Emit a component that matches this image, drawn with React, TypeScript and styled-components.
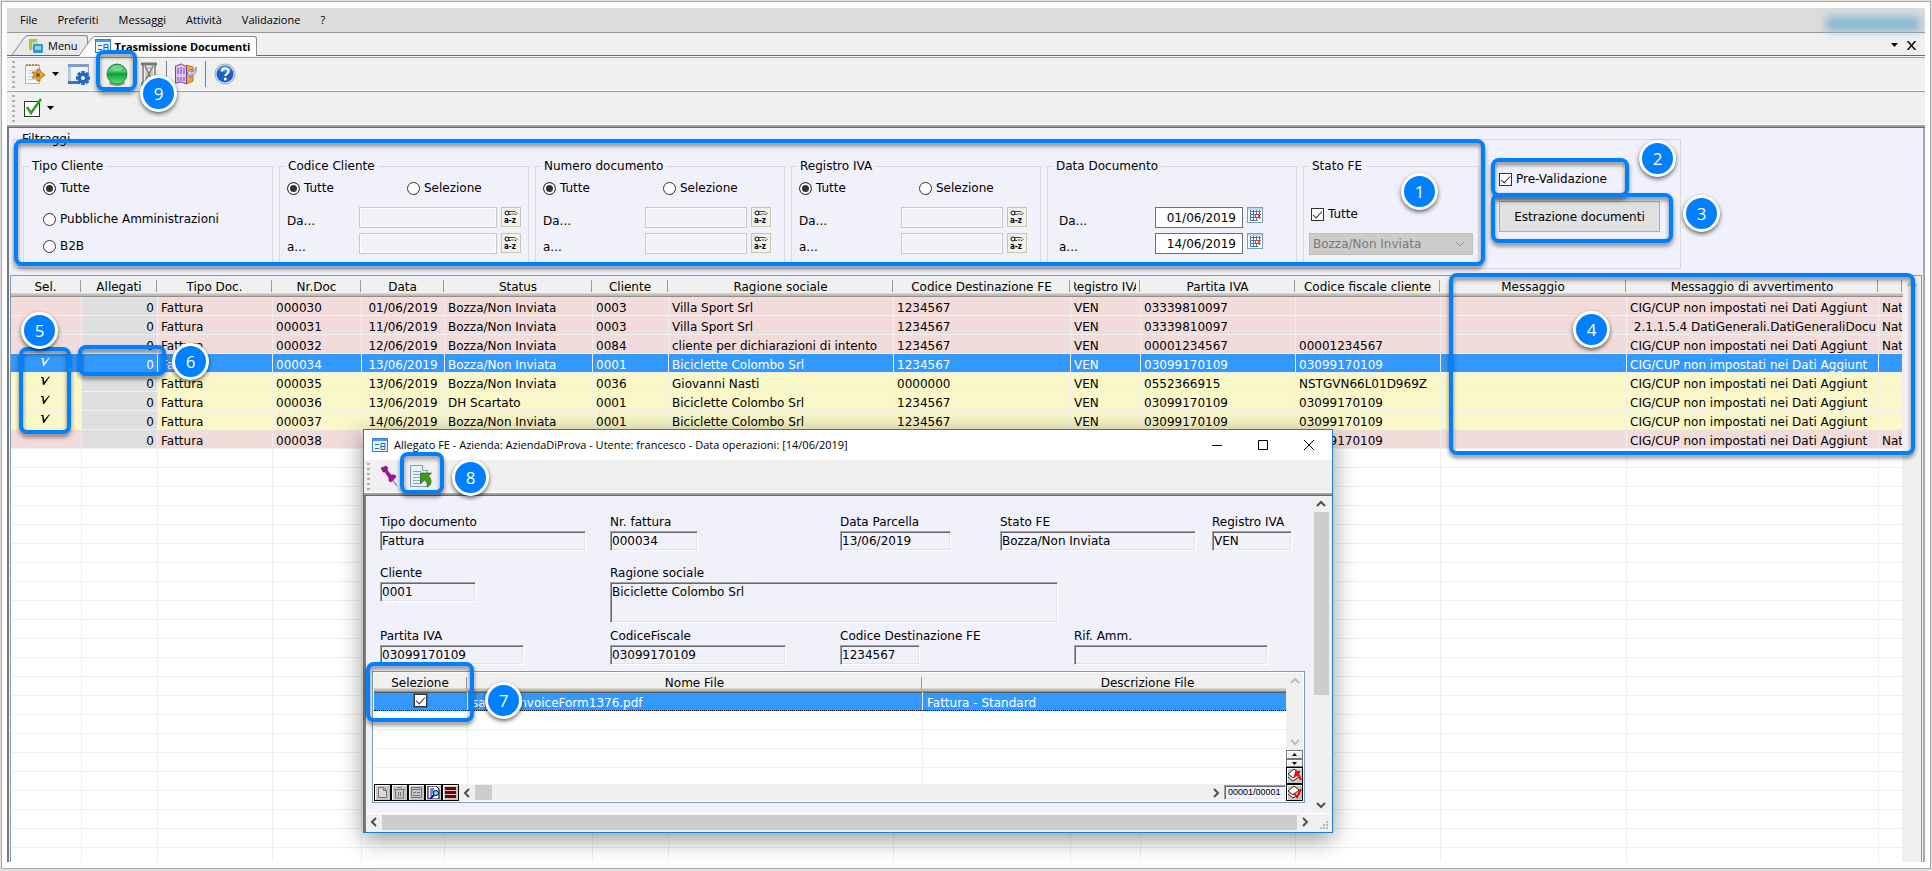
import React from 'react';
import styled, { createGlobalStyle, css } from 'styled-components';

const formFont = '"DejaVu Sans", Verdana, sans-serif';
const chromeFont = '"Open Sans", "Segoe UI", sans-serif';

const GlobalStyle = createGlobalStyle`
  *, *::before, *::after { box-sizing: border-box; }
  body { margin: 0; background: #e2e2e2; font: 12px/14px ${formFont}; color: #000; }
  button, input, select, textarea { font: inherit; color: inherit; margin: 0; }
  fieldset { min-width: 0; margin: 0; padding: 0; border: 1px solid #d9d9de; }
  legend { margin-left: 5px; padding: 0 3px; }
`;

/* ---------- shell ---------- */

const Page = styled.div`
  position: relative;
  height: 100vh;
  overflow: hidden;
  padding: 1px 1px 2px;
`;

const Frame = styled.div`
  height: 100%;
  border: 1px solid #a8a8a8;
  background: #fff;
  padding: 6px 5px;
`;

const AppWindow = styled.div`
  height: 100%;
  display: flex;
  flex-direction: column;
  background: #f1f1fb;
`;

const MenuBar = styled.nav`
  display: flex;
  align-items: center;
  gap: 20px;
  height: 25px;
  padding: 0 13px;
  background: #dcdcdc;
  border-bottom: 1px solid #999;
  font-family: ${chromeFont};
  font-size: 11px;
`;

const MenuItem = styled.button`
  padding: 0;
  border: 0;
  background: none;
`;

const Brand = styled.span`
  margin: 6px -8px 0 auto;
  width: 94px;
  height: 15px;
  background: linear-gradient(#a3c6d6, #79b3d2 60%, #8fbdd3);
  filter: blur(4px);
`;

const TabStrip = styled.div`
  display: flex;
  align-items: flex-end;
  height: 23px;
  padding: 0 9px 0 5px;
  background: #f0f0f0;
  border-bottom: 1px solid #696969;
  font-family: ${chromeFont};
  font-size: 11px;
`;

const TabButton = styled.button<{ $active?: boolean }>`
  display: flex;
  height: 20px;
  padding: 0;
  border: 0;
  background: none;
  font-weight: ${p => (p.$active ? 700 : 400)};
  ${p => p.$active && css`
    margin: 0 0 -1px -9px;
    z-index: 1;
  `}
`;

const TabBody = styled.span<{ $active?: boolean }>`
  display: flex;
  align-items: center;
  gap: 4px;
  height: 100%;
  padding-right: ${p => (p.$active ? 6 : 9)}px;
  border: solid #8a8a8a;
  border-width: 1px 1px 0 0;
  border-radius: 0 3px 0 0;
  background: ${p => (p.$active ? '#fff' : '#e9e9e9')};
`;

const StripTools = styled.div`
  display: flex;
  align-items: center;
  gap: 6px;
  margin: 0 0 2px auto;
  height: 16px;
`;

const PlainButton = styled.button<{ $w: number; $h?: number }>`
  display: grid;
  place-items: center;
  width: ${p => p.$w}px;
  height: ${p => p.$h ?? p.$w}px;
  flex: none;
  padding: 0;
  border: 0;
  background: none;
`;

const ToolbarRow = styled.div`
  display: flex;
  align-items: center;
  height: 34px;
  padding-left: 5px;
  background: #f0f0f0;
  border-top: 1px solid #a0a0a0;
  border-bottom: 1px solid #fff;
`;

const ToolbarStack = styled.div`
  padding-top: 1px;
  border-bottom: 1px solid #696969;
  box-shadow: inset 0 -2px #a0a0a0;
  padding-bottom: 2px;
`;

const Grip = styled.span`
  width: 3px;
  height: 27px;
  margin-right: 8px;
  background: repeating-linear-gradient(#b0b0b0 0 2px, transparent 2px 5px);
`;

const Divider = styled.span`
  width: 1px;
  height: 26px;
  margin: 0 7px;
  background: #808080;
`;

const Content = styled.main`
  flex: 1;
  min-height: 0;
  display: flex;
  flex-direction: column;
  border: solid;
  border-width: 0 2px;
  border-color: #7a7a7a #a8a8a8 #fff #7a7a7a;
  padding-right: 1px;
`;

/* ---------- filters ---------- */

const FilterArea = styled.div`
  display: flex;
  padding: 4px 4px 6px;
`;

const FilterBody = styled.div`
  display: flex;
  gap: 6px;
  padding: 13px 20px 3px 9px;
`;

const Group = styled.fieldset<{ $w?: number }>`
  width: ${p => p.$w ?? 250}px;
  height: 106px;
`;

const TypeRadios = styled.div`
  display: grid;
  grid-template-rows: 31px 27px 14px;
  align-items: start;
  padding: 8px 0 0 19px;
`;

const RangeBody = styled.div<{ $left: number; $right: number }>`
  display: flex;
  flex-direction: column;
  gap: 5px;
  padding: 8px ${p => p.$right}px 0 ${p => p.$left}px;
`;

const RadioPair = styled.div`
  display: grid;
  grid-template-columns: 120px auto;
  height: 14px;
  margin-bottom: 7px;
`;

const RangeRow = styled.div`
  display: flex;
  align-items: flex-start;
  gap: 4px;
  height: 21px;

  label { flex: 1; align-self: flex-end; }
`;

const Choice = styled.label`
  display: flex;
  align-items: center;
  gap: 4px;
  height: 14px;
  white-space: nowrap;
`;

const Radio = styled.input.attrs({ type: 'radio' })`
  appearance: none;
  width: 13px;
  height: 13px;
  flex: none;
  border: 1px solid #333;
  border-radius: 50%;
  background: #fff;

  &:checked { background: #333; box-shadow: inset 0 0 0 2px #fff; }
`;

const Check = styled.input.attrs({ type: 'checkbox' })`
  appearance: none;
  display: grid;
  place-items: start center;
  width: 13px;
  height: 13px;
  flex: none;
  border: 1px solid #333;
  background: #fff;

  &:checked::after {
    content: '';
    width: 5px;
    height: 9px;
    border: solid #333;
    border-width: 0 1px 1px 0;
    transform: rotate(42deg);
  }
`;

const RangeInput = styled.input<{ $w: number }>`
  width: ${p => p.$w}px;
  height: 21px;
  padding: 0 2px;
  border: 1px solid #c8c8c8;
  background: #f1f1fb;
  box-shadow: inset 0 0 0 1px #fff;
`;

const DateInput = styled.input`
  width: 88px;
  height: 21px;
  padding: 0 6px 0 2px;
  border: 1px solid #6e6e6e;
  background: #fff;
  text-align: right;
`;

const LookupButton = styled(PlainButton)`
  border: 1px solid #c5c5b8;
  background: #f2f2ea;
`;

const CalendarButton = styled(PlainButton)`
  border: 1px solid #7f9db9;
  background: #fff;
`;

const StatusBody = styled.div`
  display: flex;
  flex-direction: column;
  gap: 12px;
  padding: 34px 5px 0;

  label { padding-left: 2px; }
`;

const StatusSelectBox = styled.div`
  display: flex;
  align-items: center;
  height: 22px;
  padding-right: 7px;
  border: 1px solid #bfbfbf;
  background: #ccc;
`;

const StatusSelect = styled.select`
  appearance: none;
  flex: 1;
  padding: 0 3px;
  border: 0;
  background: none;
  opacity: 1;
  color: #787878;
`;

const Actions = styled.div`
  display: flex;
  flex-direction: column;
  gap: 15px;
  padding: 13px 0 0 14px;
`;

const ActionButton = styled.button`
  width: 161px;
  height: 31px;
  padding: 0;
  border: 1px solid #adadad;
  background: #e1e1e1;
`;

/* ---------- data grid ---------- */

const GridBox = styled.section`
  flex: 1;
  min-height: 0;
  display: flex;
  margin-left: 1px;
  border: 1px solid #7f9db9;
  border-bottom: 0;
  background: #fff;
`;

const GridClip = styled.div`
  flex: 1;
  min-width: 0;
  min-height: 0;
  overflow: hidden;
  background: #fff;
`;

const Table = styled.table<{ $w?: number }>`
  width: ${p => (p.$w ? `${p.$w}px` : '100%')};
  table-layout: fixed;
  border-collapse: separate;
  border-spacing: 0;
`;

const HeadCell = styled.th<{ $h: number }>`
  height: ${p => p.$h}px;
  padding: 0;
  font-weight: 400;
  background:
    linear-gradient(#999, #999) right 1px top 4px / 1px 12px no-repeat,
    linear-gradient(#f0f0f0, #f0f0f0 calc(100% - 4px), #dcdacb calc(100% - 4px), #b5b2a3 calc(100% - 1px), #8f8f8f calc(100% - 1px));

  span {
    display: flex;
    justify-content: center;
    margin: 0 5px 0 3px;
    overflow: hidden;
    white-space: nowrap;
  }
`;

type Tone = 'pink' | 'blue' | 'yellow' | 'empty';
const toneColor: Record<Tone, string> = { pink: '#f2dcdb', blue: '#3399ff', yellow: '#faf7c8', empty: '#fff' };

const Row = styled.tr<{ $tone: Tone }>`
  background: ${p => toneColor[p.$tone]};
  color: ${p => (p.$tone === 'blue' ? '#fff' : '#000')};

  td:nth-child(2) { ${p => (p.$tone === 'pink' || p.$tone === 'yellow') && 'background: #dfdfdf;'} }
`;

const Cell = styled.td<{ $align?: 'right' | 'center' }>`
  height: 19px;
  padding: 3px 3px 0;
  border: solid #efefef;
  border-width: 0 1px 1px 0;
  overflow: hidden;
  white-space: pre;
  text-align: ${p => p.$align ?? 'left'};
`;

const TickCell = styled(Cell)`
  padding: 0 0 2px;

  svg { display: block; margin: 0 auto; }
`;

const ScrollTrack = styled.div<{ $horizontal?: boolean; $size?: number; $grow?: boolean }>`
  display: flex;
  flex-direction: ${p => (p.$horizontal ? 'row' : 'column')};
  align-items: center;
  ${p => (p.$horizontal ? 'height' : 'width')}: ${p => p.$size ?? 16}px;
  flex: ${p => (p.$grow ? '1' : 'none')};
  background: #f0f0f0;
`;

const ScrollSpace = styled.div`flex: 1;`;

const Thumb = styled.div<{ $length?: number; $horizontal?: boolean; $grow?: boolean }>`
  ${p => (p.$horizontal ? 'width' : 'height')}: ${p => p.$length ?? 17}px;
  ${p => (p.$horizontal ? 'height' : 'width')}: 15px;
  ${p => p.$grow && 'flex: 1;'}
  background: #cdcdcd;
`;

/* ---------- dialog ---------- */

const Dialog = styled.section`
  position: absolute;
  z-index: 2;
  left: 363px;
  top: 429px;
  width: 970px;
  height: 404px;
  display: flex;
  flex-direction: column;
  border: 1px solid #1a7fd4;
  background: #f1f1fb;
  box-shadow: 0 6px 22px rgba(0, 0, 0, .42);
`;

const TitleBar = styled.header`
  display: flex;
  align-items: center;
  gap: 6px;
  height: 30px;
  padding: 0 11px 0 8px;
  background: #fff;
  font-family: ${chromeFont};
`;

const Title = styled.h1`
  flex: 1;
  margin: 0;
  font-size: 11px;
  font-weight: 400;
`;

const WindowButtons = styled.div`
  display: flex;
  gap: 22px;
`;

const DialogToolbar = styled.div`
  display: flex;
  align-items: center;
  height: 36px;
  padding: 0 0 3px 3px;
  background: #f0f0f0;
  border-bottom: 1px solid #696969;
  box-shadow: inset 0 -2px #a0a0a0, inset 0 -3px #fff;
`;

const DialogBody = styled.div`
  flex: 1;
  min-height: 0;
  display: flex;
  flex-direction: column;
  border-left: 2px solid #7a7a7a;
  padding: 0 3px 2px 0;
  background: #f0f0f0;
`;

const DialogMain = styled.div`
  flex: 1;
  min-height: 0;
  display: flex;
`;

const DialogFooter = styled.div`
  display: flex;
  align-items: flex-end;
  gap: 6px;
  border-top: 1px solid #fff;
`;

const Form = styled.form`
  flex: 1;
  min-width: 0;
  display: flex;
  flex-direction: column;
  padding: 19px 8px 10px 6px;
  background: #f1f1fb;
`;

const FormRow = styled.div<{ $after: number }>`
  display: flex;
  padding-left: 8px;
  margin-bottom: ${p => p.$after}px;
`;

const Field = styled.label<{ $span: number }>`
  display: flex;
  flex-direction: column;
  flex: none;
  gap: 2px;
  width: ${p => p.$span}px;
  white-space: nowrap;
`;

const sunken = css`
  border: 1px solid;
  border-color: #a0a0a0 #fff #fff #a0a0a0;
  box-shadow: inset 1px 1px #696969, inset -1px -1px #e3e3e3;
  background: #f1f1fb;
`;

const FieldInput = styled.input<{ $w: number }>`
  width: ${p => p.$w}px;
  height: 20px;
  padding: 0 1px;
  ${sunken}
`;

const FieldArea = styled.textarea<{ $w: number }>`
  width: ${p => p.$w}px;
  height: 41px;
  padding: 2px 1px;
  resize: none;
  ${sunken}
`;

const FileBox = styled.div`
  display: flex;
  height: 132px;
  padding: 1px;
  border: 1px solid #7f9db9;
  background: #fff;
`;

const FileMain = styled.div`
  flex: 1;
  min-width: 0;
  display: flex;
  flex-direction: column;
`;

const FileSide = styled.div`
  display: flex;
  flex-direction: column;
  width: 17px;
`;

const FileFooter = styled.div`
  display: flex;
  align-items: center;
  height: 17px;
  background: #f0f0f0;
`;

const FileCell = styled(Cell)<{ $dotted?: boolean }>`
  padding: 4px 4px 0;
  ${p => p.$dotted && 'border-bottom: 1px dotted #000; box-shadow: inset 0 1px #4e5d6c;'}
`;

const FileCheckCell = styled(FileCell)`
  padding: 0;

  ${Check} { display: inline-grid; vertical-align: top; outline: 1px solid #5b6670; }
`;

const SmallTool = styled(PlainButton)`
  border: 1px solid #000;
  background: #c6c6c6;
  box-shadow: inset 1px 1px #fff;
`;

const Spinner = styled.div`
  display: flex;
  flex-direction: column;
  height: 17px;

  button {
    border: 1px solid #777;
    background: #f0f0f0;
    box-shadow: inset 1px 1px #fff;
  }
`;

const Counter = styled.output`
  width: 62px;
  height: 15px;
  padding-left: 3px;
  font: 9px/13px "Liberation Sans", Arial, sans-serif;
  ${sunken}
`;

/* ---------- numbered callouts ---------- */

const Outline = styled.div<{ $x: number; $y: number; $w: number; $h: number }>`
  position: absolute;
  z-index: 3;
  left: ${p => p.$x}px;
  top: ${p => p.$y}px;
  width: ${p => p.$w}px;
  height: ${p => p.$h}px;
  border: 4px solid #0080ff;
  border-radius: 8px;
  filter: drop-shadow(0 3px 2px rgba(0, 0, 0, .5));
  pointer-events: none;
`;

const Bubble = styled.div<{ $x: number; $y: number }>`
  position: absolute;
  z-index: 4;
  left: ${p => p.$x - 18}px;
  top: ${p => p.$y - 18}px;
  width: 37px;
  height: 37px;
  display: grid;
  place-items: center;
  border: 3px solid #fff;
  border-radius: 50%;
  background: #0080ff;
  box-shadow: 0 2px 4px rgba(0, 0, 0, .6);
  color: #fff;
  font: 17px/20px ${chromeFont};
`;

/* ---------- drawings ---------- */

const Chevron = ({ dir, color = '#505050' }: { dir: 'up' | 'down' | 'left' | 'right'; color?: string }) => {
  const d = { up: 'M4 10l4-4 4 4', down: 'M4 6l4 4 4-4', left: 'M10 4L6 8l4 4', right: 'M6 4l4 4-4 4' }[dir];
  return <svg width="16" height="16" fill="none" stroke={color} strokeWidth="2"><path d={d} /></svg>;
};

const CaretDown = () => <svg width="7" height="4"><path d="M0 0h7L3.500 4z" fill="#000" /></svg>;

const SlantEdge = ({ fill }: { fill: string }) => (
  <svg width="16" height="20"><path d="M0 20L12 3Q14 .5 16 .5V20z" fill={fill} /><path d="M0 20L12 3Q14 .5 16 .5" fill="none" stroke="#8a8a8a" /></svg>
);

const FormIcon = () => (
  <svg width="16" height="15">
    <rect x=".5" y=".5" width="15" height="13" fill="#eaf5ff" stroke="#2f7fd6" />
    <path d="M1 1h14v2H1z" fill="#4a9bea" />
    <path d="M3 6.500h4M3 10.500h4M9 5.500h4v6H9zM9 8.500h4" fill="none" stroke="#2467b8" />
  </svg>
);

const MenuTabIcon = () => (
  <svg width="16" height="16">
    <path d="M1 1h8v3H4v8H1z" fill="#a9c938" /><path d="M4 4h7v8H4z" fill="#d0d5cc" />
    <rect x="5" y="6" width="10" height="9" rx="1" fill="#2f9bc8" /><path d="M7 9h6M7 11h6" stroke="#fff" />
  </svg>
);

const Gear = ({ x, y, r, fill }: { x: number; y: number; r: number; fill: string }) => (
  <g transform={`translate(${x} ${y})`}>
    {[0, 45, 90, 135].map(a => <rect key={a} x={-r} y={-r / 4} width={r * 2} height={r / 2} fill={fill} transform={`rotate(${a})`} />)}
    <circle r={r * 0.72} fill={fill} /><circle r={r * 0.28} fill="#fff" />
  </g>
);

const NoteGearIcon = () => (
  <svg width="22" height="24">
    <path d="M1.500 3.500h14v18h-14z" fill="#f4f8fd" stroke="#9fb6d4" />
    <path d="M2 3h13" stroke="#b48a3c" strokeWidth="2" strokeDasharray="2 1" />
    <path d="M4 8.500h9M4 11.500h8M4 14.500h8M4 17.500h9" stroke="#c6d6ea" />
    <path d="M8 10h5V7h3v2l5 4-5 4v2h-3v-3H8l2-3z" fill="#eda02c" stroke="#a8670c" strokeWidth=".8" />
    <circle cx="14" cy="13" r="2" fill="#7a4d10" />
  </svg>
);

const WindowGearIcon = () => (
  <svg width="24" height="24">
    <rect x="1.500" y="2.500" width="20" height="18" fill="#f3f3ee" stroke="#a0a8b4" />
    <path d="M1 2h21v3H1z" fill="#7d9cc8" /><path d="M1 5h3v16H1z" fill="#b7cbe6" /><path d="M1 19h12v3H1z" fill="#3f73b8" />
    <Gear x={16} y={16} r={7} fill="#2467c4" />
  </svg>
);

const BallIcon = () => (
  <svg width="24" height="24">
    <defs><linearGradient id="ball" x2="0" y2="1"><stop offset="0" stopColor="#2aa54a" /><stop offset=".35" stopColor="#4fd06f" /><stop offset=".5" stopColor="#139a3a" /><stop offset="1" stopColor="#57f07c" /></linearGradient></defs>
    <ellipse cx="12" cy="21" rx="8" ry="3" fill="#8c9a8f" />
    <circle cx="12" cy="12" r="10" fill="url(#ball)" stroke="#14762f" strokeWidth=".8" />
    <ellipse cx="12" cy="6" rx="6" ry="3" fill="#a5ecb5" opacity=".5" />
  </svg>
);

const HourglassIcon = () => (
  <svg width="18" height="24" fill="none" stroke="#777" strokeWidth="1.500">
    <path d="M1 2h16M1 22h16" strokeWidth="3" /><path d="M3 3v18M15 3v18" /><path d="M5 4l4 8-4 8M13 4l-4 8 4 8" fill="#ccc" /><path d="M6 6h6M6 18h6" stroke="#aaa" />
  </svg>
);

const DoorIcon = () => (
  <svg width="24" height="24">
    <path d="M12 3l7 2v14l-7 3z" fill="#f7a531" stroke="#c86a12" />
    <path d="M1.500 4l6-2 5 3v17l-5-2-6 1z" fill="#dcc4ee" stroke="#7a3fa8" />
    <path d="M4 6v6M7 5v7M10 6v6M4 15v4M7 15v4M10 15v4" stroke="#8a55b4" strokeWidth="1.200" />
    <path d="M22 5c1 5-1 8-5 8v3l-4-5 4-4v3c3 0 4-2 5-5z" fill="#c3d0f6" stroke="#5b78c8" strokeWidth=".8" />
  </svg>
);

const HelpIcon = () => (
  <svg width="24" height="24">
    <circle cx="12" cy="12" r="10" fill="#dfe6f2" stroke="#9aa8c2" /><circle cx="12" cy="12" r="8.500" fill="#1c5ec6" />
    <path d="M5 8a8 8 0 0 1 14 0q-7 4-14 0z" fill="#6fa4ee" opacity=".6" />
    <path d="M9 9.500c0-4 6.500-4 6.500-.3 0 2.300-3 2.300-3 4.800" fill="none" stroke="#fff" strokeWidth="2.300" /><circle cx="12.300" cy="17" r="1.500" fill="#fff" />
  </svg>
);

const CheckIcon = () => (
  <svg width="20" height="22">
    <rect x="1.500" y="4.500" width="15" height="15" fill="#fff" stroke="#2c3a2c" />
    <path d="M4 10l4 6L18 2" fill="none" stroke="#2f9e28" strokeWidth="2.500" />
  </svg>
);

const KeyIcon = () => (
  <svg width="14" height="16">
    <circle cx="3" cy="4" r="2" fill="#fff" stroke="#000" />
    <path d="M5 2.500h6l1 1 1 1-1 1h-1l-1-1-1 1-1-1-1 1H5z" fill="#fff" stroke="#000" strokeWidth=".7" />
    <text x="0" y="14" fontSize="8" fontWeight="700" fontFamily="DejaVu Sans Condensed">a-z</text>
  </svg>
);

const CalendarIcon = () => (
  <svg width="14" height="14">
    <path d="M2 3.500h11M2 6.500h11M2 9.500h11M2 12.500h8M2.500 2v11M5.500 2v11M8.500 2v11M11.500 2v9" stroke="#4d74b4" />
    <rect x="7.500" y="6.500" width="3" height="3" fill="#fff" stroke="#e03c14" /><path d="M0 0h14v2H0z" fill="#bdd6f2" />
  </svg>
);

const TickMark = () => <svg width="10" height="10"><path d="M0 1h2.500l.7 5L8 .5h1L3 9H2L1.200 2H0z" fill="currentColor" /></svg>;

const PinIcon = () => (
  <svg width="20" height="24">
    <path d="M12 15l5 7" stroke="#999" strokeWidth="1.500" />
    <path d="M1 4l5-2 2 2-1 2 4 5 4 0 1 2-5 5-2-1 0-3-4-6-2 0z" fill="#a3109c" stroke="#6f0a6c" strokeWidth=".6" />
  </svg>
);

const DocArrowIcon = () => (
  <svg width="24" height="24">
    <path d="M1.500 1.500h12l5 5v16h-17z" fill="#e9f1fb" stroke="#7f9cc4" /><path d="M13.500 1.500v5h5" fill="#fff" stroke="#7f9cc4" />
    <path d="M4 7.500h8M4 10.500h9M4 13.500h7M4 16.500h7M4 19.500h8" stroke="#8aa6ce" />
    <path d="M11.500 9h11l-3 3c4 4 3 9-1 11 0-4-1-6-3-7l-4 4z" fill="#3f9a1c" stroke="#226208" strokeWidth=".7" />
  </svg>
);

const PageIcon = () => <svg width="13" height="13" fill="#d8d8d8" stroke="#777"><path d="M2.500 1.500h5l3 3v7h-8zM7.500 1.500v3h3" /></svg>;
const TrashIcon = () => <svg width="13" height="13" fill="none" stroke="#777"><path d="M1 3.500h11M4.500 1.500h4M2.500 4v8h8V4M5.500 6v4M7.500 6v4" /></svg>;
const CardIcon = () => <svg width="13" height="13" fill="none" stroke="#777"><path d="M1.500 1.500h10v10h-10zM1 3.500h11M3 6.500h3M7 6.500h3M3 9.500h7" /></svg>;
const PreviewIcon = () => (
  <svg width="13" height="13"><path d="M1 0h8l3 3v10H1z" fill="#fff" stroke="#000" /><path d="M3 3h4M3 5h4M3 7h3M3 9h2" stroke="#00c" /><circle cx="9" cy="7" r="2.500" fill="#5fd" stroke="#006" /><path d="M7 9l-4 4" stroke="#00a" strokeWidth="2" /></svg>
);
const BarsIcon = () => <svg width="13" height="13"><path d="M1 1h11v3H1zM1 5h11v3H1zM1 9h11v3H1z" fill="#800000" /></svg>;
const StackIcon = ({ down }: { down?: boolean }) => (
  <svg width="15" height="15"><path d="M1 6l6-5 5 4-6 5zM1 9l5 4 6-4" fill="#fff" stroke="#222" /><path d={down ? 'M7 8l3 4 4-8' : 'M14 12l-3-6-3 2 1-4h4'} fill="none" stroke="#f00" strokeWidth="2" /></svg>
);
const MinimizeIcon = () => <svg width="12" height="12"><path d="M1 6.500h10" stroke="#000" /></svg>;
const MaximizeIcon = () => <svg width="12" height="12"><path d="M1.500 1.500h9v9h-9z" fill="none" stroke="#000" /></svg>;
const CloseIcon = () => <svg width="12" height="12"><path d="M1 1l10 10M11 1L1 11" stroke="#000" /></svg>;
const CloseTabIcon = () => <svg width="9" height="9"><path d="M.5 0l8 9M8.500 0l-8 9" stroke="#000" strokeWidth="1.500" /></svg>;
const GripCorner = () => <svg width="10" height="10" fill="#bcbcbc"><path d="M7 1h2v2H7zM7 4h2v2H7zM4 4h2v2H4zM7 7h2v2H7zM4 7h2v2H4zM1 7h2v2H1z" /></svg>;

/* ---------- data ---------- */

const columns: { label: string; width?: number; align?: 'right' | 'center' }[] = [
  { label: 'Sel.', width: 71, align: 'center' },
  { label: 'Allegati', width: 76, align: 'right' },
  { label: 'Tipo Doc.', width: 115 },
  { label: 'Nr.Doc', width: 89 },
  { label: 'Data', width: 83, align: 'center' },
  { label: 'Status', width: 148 },
  { label: 'Cliente', width: 76 },
  { label: 'Ragione sociale', width: 225 },
  { label: 'Codice Destinazione FE', width: 177 },
  { label: 'Registro IVA', width: 70 },
  { label: 'Partita IVA', width: 155 },
  { label: 'Codice fiscale cliente', width: 145 },
  { label: 'Messaggio', width: 186 },
  { label: 'Messaggio di avvertimento', width: 252 },
  { label: '' },
];

const BOZZA = 'Bozza/Non Inviata';
const CIG = 'CIG/CUP non impostati nei Dati Aggiunt';
const DATI = ' 2.1.1.5.4 DatiGenerali.DatiGeneraliDocu';
const COLOMBO = 'Biciclette Colombo Srl';

const records: { tone: Tone; sel: boolean; cells: string[] }[] = [
  { tone: 'pink', sel: false, cells: ['000030', '01/06/2019', BOZZA, '0003', 'Villa Sport Srl', '1234567', 'VEN', '03339810097', '', '', CIG, 'Nat'] },
  { tone: 'pink', sel: false, cells: ['000031', '11/06/2019', BOZZA, '0003', 'Villa Sport Srl', '1234567', 'VEN', '03339810097', '', '', DATI, 'Nat'] },
  { tone: 'pink', sel: false, cells: ['000032', '12/06/2019', BOZZA, '0084', 'cliente per dichiarazioni di intento', '1234567', 'VEN', '00001234567', '00001234567', '', CIG, 'Nat'] },
  { tone: 'blue', sel: true, cells: ['000034', '13/06/2019', BOZZA, '0001', COLOMBO, '1234567', 'VEN', '03099170109', '03099170109', '', CIG, ''] },
  { tone: 'yellow', sel: true, cells: ['000035', '13/06/2019', BOZZA, '0036', 'Giovanni Nasti', '0000000', 'VEN', '0552366915', 'NSTGVN66L01D969Z', '', CIG, ''] },
  { tone: 'yellow', sel: true, cells: ['000036', '13/06/2019', 'DH Scartato', '0001', COLOMBO, '1234567', 'VEN', '03099170109', '03099170109', '', CIG, ''] },
  { tone: 'yellow', sel: true, cells: ['000037', '14/06/2019', BOZZA, '0001', COLOMBO, '1234567', 'VEN', '03099170109', '03099170109', '', CIG, ''] },
  { tone: 'pink', sel: false, cells: ['000038', '', '', '', '', '', '', '', '03099170109', '', CIG, 'Nat'] },
];

const outlines = [
  [14, 139, 1471, 127], [1491, 158, 138, 39], [1491, 193, 182, 50], [1449, 273, 466, 182],
  [19, 347, 52, 87], [78, 345, 88, 31], [96, 50, 41, 41], [400, 452, 44, 42], [366, 662, 108, 60],
];

const bubbles = [
  [1419, 191], [1657, 158], [1701, 213], [1591, 329], [39, 330], [190, 361], [503, 700], [470, 477], [158, 93],
];

/* ---------- sections ---------- */

const RangeGroup = ({ name, title, inputWidth, right }: { name: string; title: string; inputWidth: number; right: number }) => (
  <Group>
    <legend>{title}</legend>
    <RangeBody $left={7} $right={right}>
      <RadioPair>
        <Choice><Radio name={name} defaultChecked />Tutte</Choice>
        <Choice><Radio name={name} />Selezione</Choice>
      </RadioPair>
      {['Da...', 'a...'].map(text => (
        <RangeRow key={text}>
          <label htmlFor={name + text}>{text}</label>
          <RangeInput id={name + text} $w={inputWidth} disabled />
          <LookupButton type="button" $w={20} aria-label={`Cerca ${title}`}><KeyIcon /></LookupButton>
        </RangeRow>
      ))}
    </RangeBody>
  </Group>
);

const Filters = () => (
  <FilterArea>
    <fieldset>
      <legend>Filtraggi</legend>
      <FilterBody>
        <Group>
          <legend>Tipo Cliente</legend>
          <TypeRadios>
            <Choice><Radio name="tipo" defaultChecked />Tutte</Choice>
            <Choice><Radio name="tipo" />Pubbliche Amministrazioni</Choice>
            <Choice><Radio name="tipo" />B2B</Choice>
          </TypeRadios>
        </Group>
        <RangeGroup name="codice" title="Codice Cliente" inputWidth={138} right={7} />
        <RangeGroup name="numero" title="Numero documento" inputWidth={102} right={13} />
        <RangeGroup name="registro" title="Registro IVA" inputWidth={102} right={13} />
        <Group>
          <legend>Data Documento</legend>
          <RangeBody $left={11} $right={33}>
            <RadioPair />
            {[['Da...', '01/06/2019'], ['a...', '14/06/2019']].map(([text, value]) => (
              <RangeRow key={text}>
                <label htmlFor={'data' + text}>{text}</label>
                <DateInput id={'data' + text} defaultValue={value} />
                <CalendarButton type="button" $w={16} aria-label="Calendario"><CalendarIcon /></CalendarButton>
              </RangeRow>
            ))}
          </RangeBody>
        </Group>
        <Group $w={176}>
          <legend>Stato FE</legend>
          <StatusBody>
            <Choice><Check defaultChecked />Tutte</Choice>
            <StatusSelectBox>
              <StatusSelect aria-label="Stato FE" disabled><option>{BOZZA}</option></StatusSelect>
              <svg width="10" height="6" fill="none" stroke="#999"><path d="M1 1l4 4 4-4" /></svg>
            </StatusSelectBox>
          </StatusBody>
        </Group>
        <Actions>
          <Choice><Check defaultChecked />Pre-Validazione</Choice>
          <ActionButton type="button">Estrazione documenti</ActionButton>
        </Actions>
      </FilterBody>
    </fieldset>
  </FilterArea>
);

const DocumentGrid = () => (
  <GridBox>
    <GridClip>
      <Table>
        <colgroup>{columns.map(c => <col key={c.label} width={c.width} />)}</colgroup>
        <thead><tr>{columns.map(c => <HeadCell key={c.label} $h={21}><span>{c.label}</span></HeadCell>)}</tr></thead>
        <tbody>
          {records.map(r => (
            <Row key={r.cells[0]} $tone={r.tone}>
              <TickCell>{r.sel && <TickMark />}</TickCell>
              <Cell $align="right">0</Cell>
              <Cell>Fattura</Cell>
              {r.cells.map((text, i) => <Cell key={i} $align={columns[i + 3].align}>{text}</Cell>)}
            </Row>
          ))}
          {Array.from({ length: 22 }, (_, n) => (
            <Row key={n} $tone="empty">{columns.map(c => <Cell key={c.label} />)}</Row>
          ))}
        </tbody>
      </Table>
    </GridClip>
    <ScrollTrack $size={18}><Chevron dir="up" color="#b8b8b8" /></ScrollTrack>
  </GridBox>
);

const TextField = ({ label, value, span, width }: { label: string; value: string; span: number; width: number }) => (
  <Field $span={span}>{label}<FieldInput $w={width} value={value} readOnly /></Field>
);

const FileTable = () => (
  <FileBox>
    <FileMain>
      <GridClip>
        <Table $w={1000}>
          <colgroup><col width={94} /><col width={455} /><col /></colgroup>
          <thead><tr>{['Selezione', 'Nome File', 'Descrizione File'].map(t => <HeadCell key={t} $h={19}><span>{t}</span></HeadCell>)}</tr></thead>
          <tbody>
            <Row $tone="blue">
              <FileCheckCell $dotted $align="center"><Check defaultChecked aria-label="Seleziona file" /></FileCheckCell>
              <FileCell $dotted>sampleInvoiceForm1376.pdf</FileCell>
              <FileCell $dotted>Fattura - Standard</FileCell>
            </Row>
            {[1, 2, 3, 4].map(n => <Row key={n} $tone="empty"><FileCell /><FileCell /><FileCell /></Row>)}
          </tbody>
        </Table>
      </GridClip>
      <FileFooter>
        <SmallTool type="button" $w={17} aria-label="Nuovo"><PageIcon /></SmallTool>
        <SmallTool type="button" $w={17} aria-label="Elimina"><TrashIcon /></SmallTool>
        <SmallTool type="button" $w={17} aria-label="Scheda"><CardIcon /></SmallTool>
        <SmallTool type="button" $w={17} aria-label="Anteprima"><PreviewIcon /></SmallTool>
        <SmallTool type="button" $w={17} aria-label="Elenco"><BarsIcon /></SmallTool>
        <Chevron dir="left" /><Thumb $horizontal /><ScrollSpace /><Chevron dir="right" />
        <Counter>00001/00001</Counter>
      </FileFooter>
    </FileMain>
    <FileSide>
      <ScrollTrack $grow $size={17}><Chevron dir="up" color="#bdbdbd" /><ScrollSpace /><Chevron dir="down" color="#bdbdbd" /></ScrollTrack>
      <Spinner>
        <PlainButton type="button" $w={17} $h={9} aria-label="Su"><svg width="5" height="3"><path d="M0 3h5L2.500 0z" /></svg></PlainButton>
        <PlainButton type="button" $w={17} $h={8} aria-label="Giù"><svg width="5" height="3"><path d="M0 0h5L2.500 3z" /></svg></PlainButton>
      </Spinner>
      <SmallTool type="button" $w={17} aria-label="Primo"><StackIcon /></SmallTool>
      <SmallTool type="button" $w={17} aria-label="Ultimo"><StackIcon down /></SmallTool>
    </FileSide>
  </FileBox>
);

const AttachmentDialog = () => (
  <Dialog role="dialog" aria-labelledby="dialog-title">
    <TitleBar>
      <FormIcon />
      <Title id="dialog-title">Allegato FE - Azienda: AziendaDiProva - Utente: francesco - Data operazioni: [14/06/2019]</Title>
      <WindowButtons>
        <PlainButton $w={24} aria-label="Riduci"><MinimizeIcon /></PlainButton>
        <PlainButton $w={24} aria-label="Ingrandisci"><MaximizeIcon /></PlainButton>
        <PlainButton $w={24} aria-label="Chiudi"><CloseIcon /></PlainButton>
      </WindowButtons>
    </TitleBar>
    <DialogToolbar>
      <Grip />
      <PlainButton $w={24} aria-label="Fissa"><PinIcon /></PlainButton>
      <PlainButton $w={38} $h={24} aria-label="Apri allegato"><DocArrowIcon /></PlainButton>
    </DialogToolbar>
    <DialogBody>
      <DialogMain>
        <Form>
          <FormRow $after={15}>
            <TextField label="Tipo documento" value="Fattura" span={230} width={206} />
            <TextField label="Nr. fattura" value="000034" span={230} width={88} />
            <TextField label="Data Parcella" value="13/06/2019" span={160} width={111} />
            <TextField label="Stato FE" value={BOZZA} span={212} width={196} />
            <TextField label="Registro IVA" value="VEN" span={80} width={80} />
          </FormRow>
          <FormRow $after={6}>
            <TextField label="Cliente" value="0001" span={230} width={96} />
            <Field $span={448}>Ragione sociale<FieldArea $w={448} value={COLOMBO} readOnly /></Field>
          </FormRow>
          <FormRow $after={6}>
            <TextField label="Partita IVA" value="03099170109" span={230} width={144} />
            <TextField label="CodiceFiscale" value="03099170109" span={230} width={176} />
            <TextField label="Codice Destinazione FE" value="1234567" span={234} width={80} />
            <TextField label="Rif. Amm." value="" span={194} width={194} />
          </FormRow>
          <FileTable />
        </Form>
        <ScrollTrack><Chevron dir="up" /><Thumb $length={183} /><ScrollSpace /><Chevron dir="down" /></ScrollTrack>
      </DialogMain>
      <DialogFooter>
        <ScrollTrack $horizontal $grow>
          <Chevron dir="left" /><Thumb $horizontal $grow /><Chevron dir="right" />
        </ScrollTrack>
        <GripCorner />
      </DialogFooter>
    </DialogBody>
  </Dialog>
);

export default function App() {
  return (
    <Page>
      <GlobalStyle />
      <Frame>
        <AppWindow>
          <MenuBar>
            {['File', 'Preferiti', 'Messaggi', 'Attività', 'Validazione', '?'].map(t => <MenuItem key={t}>{t}</MenuItem>)}
            <Brand />
          </MenuBar>
          <TabStrip>
            <TabButton><SlantEdge fill="#e9e9e9" /><TabBody><MenuTabIcon />Menu</TabBody></TabButton>
            <TabButton $active><SlantEdge fill="#fff" /><TabBody $active><FormIcon />Trasmissione Documenti</TabBody></TabButton>
            <StripTools>
              <PlainButton $w={12} aria-label="Elenco schede"><CaretDown /></PlainButton>
              <PlainButton $w={10} aria-label="Chiudi scheda"><CloseTabIcon /></PlainButton>
            </StripTools>
          </TabStrip>
          <ToolbarStack>
            <ToolbarRow>
              <Grip />
              <PlainButton $w={24} aria-label="Elabora"><NoteGearIcon /></PlainButton>
              <PlainButton $w={16} aria-label="Altre elaborazioni"><CaretDown /></PlainButton>
              <PlainButton $w={32} $h={24} aria-label="Impostazioni"><WindowGearIcon /></PlainButton>
              <PlainButton $w={44} $h={24} aria-label="Esegui"><BallIcon /></PlainButton>
              <PlainButton $w={20} $h={24} aria-label="Attesa"><HourglassIcon /></PlainButton>
              <Divider />
              <PlainButton $w={24} aria-label="Esci"><DoorIcon /></PlainButton>
              <Divider />
              <PlainButton $w={24} aria-label="Aiuto"><HelpIcon /></PlainButton>
            </ToolbarRow>
            <ToolbarRow>
              <Grip />
              <PlainButton $w={20} $h={24} aria-label="Seleziona"><CheckIcon /></PlainButton>
              <PlainButton $w={14} aria-label="Opzioni di selezione"><CaretDown /></PlainButton>
            </ToolbarRow>
          </ToolbarStack>
          <Content>
            <Filters />
            <DocumentGrid />
          </Content>
        </AppWindow>
      </Frame>
      <AttachmentDialog />
      {outlines.map(([x, y, w, h]) => <Outline key={`${x}-${y}`} $x={x} $y={y} $w={w} $h={h} />)}
      {bubbles.map(([x, y], i) => <Bubble key={i} $x={x} $y={y}>{i + 1}</Bubble>)}
    </Page>
  );
}
